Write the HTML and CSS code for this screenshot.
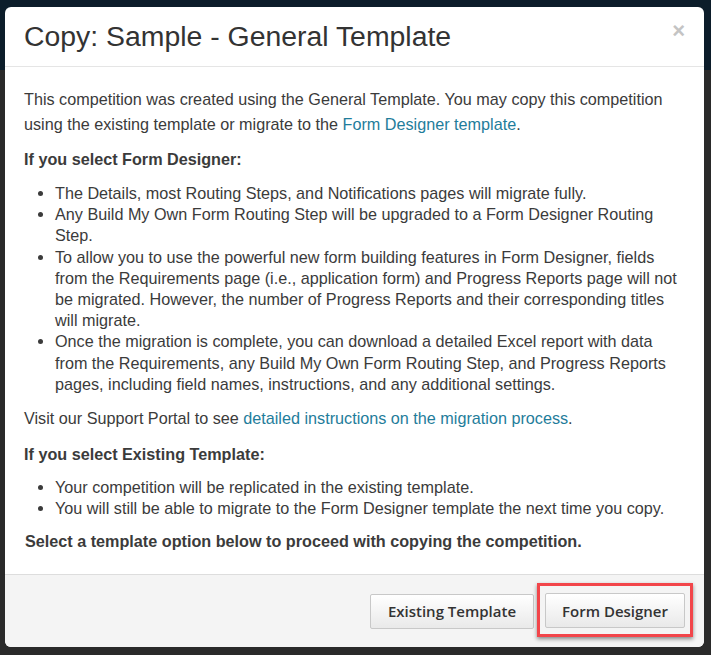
FILE: index.html
```html
<!DOCTYPE html>
<html>
<head>
<meta charset="utf-8">
<link rel="stylesheet" href="styles.css">
</head>
<body>
<div class="modal">
  <div class="modal-header">
    <h1 class="title">Copy: Sample - General Template</h1>
    <span class="close">×</span>
  </div>
  <div class="modal-body">
    <p class="intro">This competition was created using the General Template. You may copy this competition using the existing template or migrate to the <a href="#">Form Designer template</a>.</p>
    <p class="heading h-first">If you select Form Designer:</p>
    <ul class="list">
      <li>The Details, most Routing Steps, and Notifications pages will migrate fully.</li>
      <li>Any Build My Own Form Routing Step will be upgraded to a Form Designer Routing Step.</li>
      <li>To allow you to use the powerful new form building features in Form Designer, fields from the Requirements page (i.e., application form) and Progress Reports page will not be migrated. However, the number of Progress Reports and their corresponding titles will migrate.</li>
      <li>Once the migration is complete, you can download a detailed Excel report with data from the Requirements, any Build My Own Form Routing Step, and Progress Reports pages, including field names, instructions, and any additional settings.</li>
    </ul>
    <p class="para">Visit our Support Portal to see <a href="#">detailed instructions on the migration process</a>.</p>
    <p class="heading h-second">If you select Existing Template:</p>
    <ul class="list list-second">
      <li>Your competition will be replicated in the existing template.</li>
      <li>You will still be able to migrate to the Form Designer template the next time you copy.</li>
    </ul>
    <p class="heading final">Select a template option below to proceed with copying the competition.</p>
  </div>
  <div class="modal-footer">
    <button class="btn">Existing Template</button>
    <div class="highlight">
      <button class="btn">Form Designer</button>
    </div>
  </div>
</div>
</body>
</html>
```

FILE: styles.css
```css
html, body {
  margin: 0;
  padding: 0;
}
body {
  width: 711px;
  height: 655px;
  overflow: hidden;
  background: linear-gradient(#0c1d2a 0, #0c1d2a 70px, #2a2a2a 70px, #2a2a2a 100%);
  font-family: "Liberation Sans", Arial, sans-serif;
  color: #333;
}
.modal {
  margin: 7px 0 0 5px;
  width: 699px;
  height: 640px;
  background: #fff;
  border-radius: 6px;
  display: flex;
  flex-direction: column;
  overflow: hidden;
}
.modal-header {
  height: 59px;
  border-bottom: 1px solid #e5e5e5;
  display: flex;
  align-items: flex-start;
  justify-content: space-between;
  padding: 0 19px 0 19px;
}
.title {
  margin: 13px 0 0 0;
  font-size: 28.4px;
  font-weight: normal;
  color: #333;
  line-height: 33px;
}
.close {
  margin-top: 12px;
  font-size: 22px;
  font-weight: bold;
  color: #c4c4c4;
  line-height: 24px;
}
.modal-body {
  flex: 1;
  padding: 20px 23px 0 19px;
  font-size: 16.2px;
  color: #3b3b3b;
}
.modal-body p {
  margin: 0;
}
.intro {
  line-height: 25px;
}
a {
  color: #1f7d9b;
  text-decoration: none;
}
.heading {
  font-weight: bold;
  line-height: 21px;
}
.h-first {
  margin-top: 12px !important;
}
.h-second {
  margin-top: 15px !important;
}
.list {
  margin: 13px 0 0 0;
  padding-left: 31px;
  line-height: 21.2px;
}
.list-second {
  margin-top: 12px;
}
.list li {
  margin: 0;
}
.para {
  line-height: 21px;
  margin-top: 13px !important;
}
.final {
  margin-top: 12px !important;
  padding-left: 1px;
}
.modal-footer {
  height: 72px;
  border-top: 1px solid #ddd;
  background: #f4f4f4;
  display: flex;
  align-items: center;
  justify-content: flex-end;
  gap: 3px;
  padding-right: 11px;
}
.btn {
  font-family: "Open Sans", sans-serif;
  font-weight: 600;
  font-size: 15px;
  color: #333;
  height: 35px;
  padding: 0 17px;
  border: 1px solid #c8c8c8;
  border-radius: 2px;
  background: linear-gradient(#ffffff, #e9e9e9);
}
.highlight {
  border: 3px solid #f2454a;
  padding: 7px 5px 6px 5px;
  box-shadow: 0 2px 4px rgba(0,0,0,0.45);
  margin-top: -2px;
}
.highlight .btn {
  padding: 0 16px;
}
```
